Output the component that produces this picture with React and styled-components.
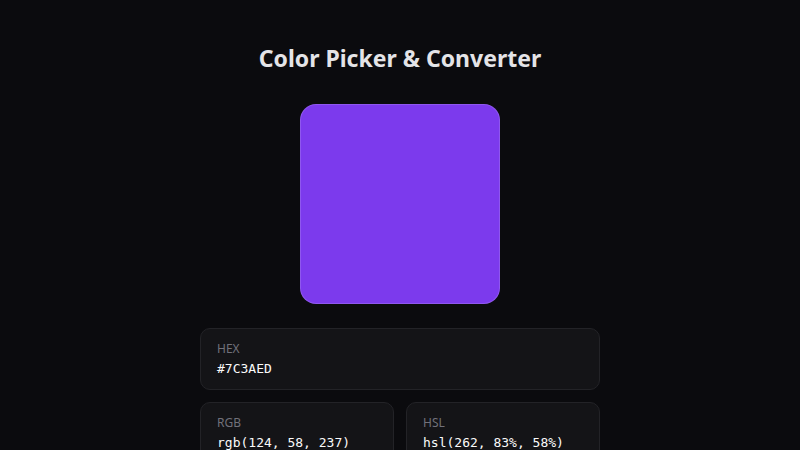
import styled, { createGlobalStyle } from "styled-components";

const GlobalStyle = createGlobalStyle`
    html, body {
        margin: 0;
        padding: 0;
        background-color: #0b0b0e;
    }
    body {
        font-family: "Noto Sans", "Open Sans", sans-serif;
        color: #e4e4e7;
    }
`;

const Page = styled.div`
    width: 800px;
    height: 450px;
    overflow: hidden;
    display: flex;
    flex-direction: column;
    align-items: center;
    padding-top: 40px;
    box-sizing: border-box;
`;

const Title = styled.h1`
    margin: 0;
    font-size: 23px;
    line-height: 36px;
    font-weight: 700;
    color: #e4e4e7;
`;

const Swatch = styled.div`
    flex-shrink: 0;
    margin-top: 28px;
    width: 200px;
    height: 200px;
    box-sizing: border-box;
    border-radius: 16px;
    background-color: ${props => props.color};
    border: 1px solid rgba(255, 255, 255, 0.15);
`;

const Grid = styled.div`
    flex-shrink: 0;
    margin-top: 24px;
    width: 400px;
    display: grid;
    grid-template-columns: 1fr 1fr;
    gap: 12px;
`;

const Card = styled.div`
    grid-column: ${props => props.$wide ? "1 / -1" : "auto"};
    background-color: #141417;
    border: 1px solid #232327;
    border-radius: 10px;
    padding: 12px 16px 11px;
    display: flex;
    flex-direction: column;
    gap: 3px;
`;

const Label = styled.span`
    font-size: 12px;
    line-height: 16px;
    color: #71717a;
`;

const Value = styled.span`
    font-family: "DejaVu Sans Mono", monospace;
    font-size: 13px;
    line-height: 18px;
    color: #fafafa;
`;

const formats = [
    { label: "HEX", value: "#7C3AED", wide: true },
    { label: "RGB", value: "rgb(124, 58, 237)" },
    { label: "HSL", value: "hsl(262, 83%, 58%)" },
];

const App = () => {
    return (
        <Page>
            <GlobalStyle />
            <Title>Color Picker &amp; Converter</Title>
            <Swatch color="#7c3aed" />
            <Grid>
                {formats.map((item) => (
                    <Card key={item.label} $wide={item.wide}>
                        <Label>{item.label}</Label>
                        <Value>{item.value}</Value>
                    </Card>
                ))}
            </Grid>
        </Page>
    );
};

export default App;
